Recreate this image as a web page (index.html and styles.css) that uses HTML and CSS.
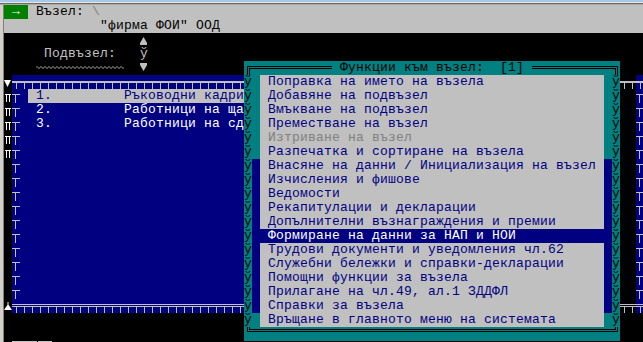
FILE: index.html
```html
<!DOCTYPE html>
<html>
<head>
<meta charset="utf-8">
<link rel="stylesheet" href="styles.css">
</head>
<body>
<div class="chrome"></div>
<div class="frame">
  <div class="edge"></div>
  <div class="screen">
    <div class="row gr"><span class="grn"> → </span><span class="tk"> Възел: </span><span class="slash">\</span></div>
    <div class="row gr"><span class="tk">            "фирма ФОИ" ООД</span></div>
    <div class="row"><span class="lt">                 </span><span class="up"></span></div>
    <div class="row"><span class="lt">     Подвъзел:   ў</span></div>
    <div class="row"><span class="lt">    </span><svg class="wave" width="88" height="14" viewBox="0 0 88 14"><path d="M0 6.5 Q1 4.5 2 6.5 T4 6.5 T6 6.5 T8 6.5 T10 6.5 T12 6.5 T14 6.5 T16 6.5 T18 6.5 T20 6.5 T22 6.5 T24 6.5 T26 6.5 T28 6.5 T30 6.5 T32 6.5 T34 6.5 T36 6.5 T38 6.5 T40 6.5 T42 6.5 T44 6.5 T46 6.5 T48 6.5 T50 6.5 T52 6.5 T54 6.5 T56 6.5 T58 6.5 T60 6.5 T62 6.5 T64 6.5 T66 6.5 T68 6.5 T70 6.5 T72 6.5 T74 6.5 T76 6.5 T78 6.5 T80 6.5 T82 6.5 T84 6.5 T86 6.5 T88 6.5"/></svg><span class="lt">  </span><span class="down"></span></div>
    <div class="row"><span class="dn"></span><span class="hd main"></span><span class="hd sh"></span><span class="hd end"></span></div>
    <div class="row"><span class="pi"></span><span class="tee"></span><span class="lst"><span class="gap"> </span><span class="hl"> 1.         Ръководни кадри</span></span><span class="shd"></span><span class="tee"></span></div>
    <div class="row"><span class="pi"></span><span class="tee"></span><span class="lst">  2.         Работници на ща</span><span class="shd"></span><span class="tee"></span></div>
    <div class="row"><span class="pi"></span><span class="tee"></span><span class="lst">  3.         Работници на сд</span><span class="shd"></span><span class="tee"></span></div>
    <div class="row"><span class="pi"></span><span class="tee"></span><span class="lst"></span><span class="shd"></span><span class="tee"></span></div>
    <div class="row"><span class="pi"></span><span class="tee"></span><span class="lst"></span><span class="shd"></span><span class="tee"></span></div>
    <div class="row"><span class="k"></span><span class="tee"></span><span class="lst"></span><span class="shd"></span><span class="tee"></span></div>
    <div class="row"><span class="k"></span><span class="tee"></span><span class="lst"></span><span class="shd"></span><span class="tee"></span></div>
    <div class="row"><span class="k"></span><span class="tee"></span><span class="lst"></span><span class="shd"></span><span class="tee"></span></div>
    <div class="row"><span class="k"></span><span class="tee"></span><span class="lst"></span><span class="shd"></span><span class="tee"></span></div>
    <div class="row"><span class="k"></span><span class="tee"></span><span class="lst"></span><span class="shd"></span><span class="tee"></span></div>
    <div class="row"><span class="k"></span><span class="tee"></span><span class="lst"></span><span class="shd"></span><span class="tee"></span></div>
    <div class="row"><span class="k"></span><span class="tee"></span><span class="lst"></span><span class="shd"></span><span class="tee"></span></div>
    <div class="row"><span class="k"></span><span class="tee"></span><span class="lst"></span><span class="shd"></span><span class="tee"></span></div>
    <div class="row"><span class="k"></span><span class="tee"></span><span class="lst"></span><span class="shd"></span><span class="tee"></span></div>
    <div class="row"><span class="k"></span><span class="tee"></span><span class="lst"></span><span class="shd"></span><span class="tee"></span></div>
    <div class="row"><span class="upw"></span><span class="ft main"></span><span class="ft sh"></span><span class="ft end"></span></div>
    <div class="row"></div>
    <div class="row"></div>
    <div class="row last"><span class="sb1"></span><span class="sb2"></span></div>

    <div class="menu">
      <div class="mtop"><span class="tl"></span><span class="dbl"></span><span class="ttl"> Функции към възел:  [1] </span><span class="dbl"></span><span class="tr"></span></div>
      <div class="mi"><span class="bd">ў</span><span class="sd"></span><span class="it">Поправка на името на възела</span><span class="sd"></span><span class="bd">ў</span></div>
      <div class="mi"><span class="bd">ў</span><span class="sd"></span><span class="it">Добавяне на подвъзел</span><span class="sd"></span><span class="bd">ў</span></div>
      <div class="mi"><span class="bd">ў</span><span class="sd"></span><span class="it">Вмъкване на подвъзел</span><span class="sd"></span><span class="bd">ў</span></div>
      <div class="mi"><span class="bd">ў</span><span class="sd"></span><span class="it">Преместване на възел</span><span class="sd"></span><span class="bd">ў</span></div>
      <div class="mi"><span class="bd">ў</span><span class="sd"></span><span class="it dis">Изтриване на възел</span><span class="sd"></span><span class="bd">ў</span></div>
      <div class="mi"><span class="bd">ў</span><span class="sd"></span><span class="it">Разпечатка и сортиране на възела</span><span class="sd"></span><span class="bd">ў</span></div>
      <div class="mi b"><span class="bd">ў</span><span class="sd"></span><span class="it">Внасяне на данни / Инициализация на възел</span><span class="sd"></span><span class="bd">ў</span></div>
      <div class="mi b"><span class="bd">ў</span><span class="sd"></span><span class="it">Изчисления и фишове</span><span class="sd"></span><span class="bd">ў</span></div>
      <div class="mi b"><span class="bd">ў</span><span class="sd"></span><span class="it">Ведомости</span><span class="sd"></span><span class="bd">ў</span></div>
      <div class="mi b"><span class="bd">ў</span><span class="sd"></span><span class="it">Рекапитулации и декларации</span><span class="sd"></span><span class="bd">ў</span></div>
      <div class="mi b"><span class="bd">ў</span><span class="sd"></span><span class="it">Допълнителни възнаграждения и премии</span><span class="sd"></span><span class="bd">ў</span></div>
      <div class="mi b"><span class="bd">ў</span><span class="sd"></span><span class="it sel">Формиране на данни за НАП и НОИ</span><span class="sd"></span><span class="bd">ў</span></div>
      <div class="mi b"><span class="bd">ў</span><span class="sd"></span><span class="it">Трудови документи и уведомления чл.62</span><span class="sd"></span><span class="bd">ў</span></div>
      <div class="mi b"><span class="bd">ў</span><span class="sd"></span><span class="it">Служебни бележки и справки-декларации</span><span class="sd"></span><span class="bd">ў</span></div>
      <div class="mi b"><span class="bd">ў</span><span class="sd"></span><span class="it">Помощни функции за възела</span><span class="sd"></span><span class="bd">ў</span></div>
      <div class="mi b"><span class="bd">ў</span><span class="sd"></span><span class="it">Прилагане на чл.49, ал.1 ЗДДФЛ</span><span class="sd"></span><span class="bd">ў</span></div>
      <div class="mi b"><span class="bd">ў</span><span class="sd"></span><span class="it">Справки за възела</span><span class="sd"></span><span class="bd">ў</span></div>
      <div class="mi"><span class="bd">ў</span><span class="sd"></span><span class="it">Връщане в главното меню на системата</span><span class="sd"></span><span class="bd">ў</span></div>
      <div class="mbot"><span class="bl"></span><span class="dblb"></span><span class="br"></span></div>
    </div>
  </div>
</div>
</body>
</html>
```

FILE: styles.css
```css
html, body {
  margin: 0;
  padding: 0;
}
body {
  width: 643px;
  height: 342px;
  overflow: hidden;
  background: #000;
  font-family: "Liberation Mono", "DejaVu Sans Mono", monospace;
  font-size: 13px;
  letter-spacing: 0.2px;
  line-height: 14px;
}
.chrome {
  height: 5px;
  background: linear-gradient(to bottom, #a6c8ee 0 2px, #e6e6e6 2px 3px, #6e6c60 3px 4px, #a8a8a0 4px 5px);
}
.frame {
  display: flex;
  height: 337px;
}
.edge {
  width: 4px;
  flex: none;
  background: linear-gradient(to right, #d4d0c8 0 3px, #808080 3px 4px);
}
.screen {
  position: relative;
  width: 639px;
  height: 337px;
  overflow: hidden;
  flex: none;
}
.row {
  display: flex;
  height: 14px;
  white-space: pre;
}
.row > * { flex: none; }
.row.last { height: 1px; }
.gr { background: #c0c0c0; }
.grn { background: #008000; color: #fff; }
.tk { color: #000; }
.slash { color: #808080; }
.lt { color: #c0c0c0; }
.wave { display: block; }
.wave path { fill: none; stroke: #b8b8b8; stroke-width: 1; }

.up, .down, .dn, .upw, .k, .pi, .tee {
  display: block;
  width: 8px;
  height: 14px;
  position: relative;
}
.up::after {
  content: "";
  position: absolute;
  left: 0;
  top: 4px;
  width: 7px;
  height: 8px;
  background: #c0c0c0;
  clip-path: polygon(50% 0, 100% 75%, 100% 100%, 0 100%, 0 75%);
}
.down::after {
  content: "";
  position: absolute;
  left: 0;
  top: 2px;
  width: 7px;
  height: 8px;
  background: #c0c0c0;
  clip-path: polygon(0 0, 100% 0, 100% 25%, 50% 100%, 0 25%);
}
.dn::after {
  content: "";
  position: absolute;
  left: 0;
  top: 5px;
  width: 7px;
  height: 7px;
  background: #fff;
  clip-path: polygon(0 0, 100% 0, 50% 100%);
}
.upw::after {
  content: "";
  position: absolute;
  left: 0;
  top: 3px;
  width: 8px;
  height: 8px;
  background: #fff;
  clip-path: polygon(44% 0, 56% 0, 56% 35%, 100% 100%, 0 100%, 44% 35%);
}
.pi {
  background:
    linear-gradient(#fff, #fff) 1px 5px / 6px 1px no-repeat,
    linear-gradient(#fff, #fff) 2px 5px / 1px 8px no-repeat,
    linear-gradient(#fff, #fff) 5px 5px / 1px 8px no-repeat,
    #000;
}
.tee {
  background:
    linear-gradient(#c0c0c0, #c0c0c0) 0 5px / 8px 1px no-repeat,
    linear-gradient(#c0c0c0, #c0c0c0) 3px 5px / 1px 9px no-repeat,
    #000080;
}
.hd, .ft { display: block; height: 14px; }
.hd {
  background:
    linear-gradient(#c0c0c0, #c0c0c0) 0 6px / 100% 2px no-repeat,
    repeating-linear-gradient(to right, transparent 0 4px, #c0c0c0 4px 5px, transparent 5px 8px) 0 8px / 100% 6px no-repeat,
    #000080;
}
.ft {
  background:
    linear-gradient(#c0c0c0, #c0c0c0) 0 5px / 100% 1px no-repeat,
    linear-gradient(#c0c0c0, #c0c0c0) 0 7px / 100% 1px no-repeat,
    repeating-linear-gradient(to right, transparent 0 4px, #c0c0c0 4px 5px, transparent 5px 8px) 0 8px / 100% 6px no-repeat,
    #000080;
}
.hd.sh, .ft.sh { background-color: #000; width: 16px; }
.main { width: 608px; }
.end { width: 8px; }
.lst {
  display: flex;
  width: 600px;
  height: 14px;
  background: #000080;
  color: #fff;
  overflow: hidden;
}
.hl { flex: 1; background: #c0c0c0; color: #000080; }
.shd { display: block; width: 16px; height: 14px; background: #000; }
.sb1 { display: block; width: 25px; height: 1px; margin-left: 8px; background: #c0c0c0; }
.sb2 { display: block; width: 14px; height: 1px; margin-left: 1px; background: #c0c0c0; }

/* menu window */
.menu {
  position: absolute;
  left: 240px;
  top: 56px;
  width: 376px;
  display: flex;
  flex-direction: column;
  white-space: pre;
}
.mtop, .mbot, .mi {
  display: flex;
  height: 14px;
  background: #008080;
}
.mtop > *, .mbot > *, .mi > * { flex: none; display: block; height: 14px; }
.ttl { color: #000; }
.bd { width: 8px; color: #000; overflow: hidden; }
.sd { width: 8px; }
.mi.b .sd { background: #000080; }
.it {
  width: 344px;
  box-sizing: border-box;
  padding-left: 8px;
  background: #c0c0c0;
  color: #000080;
  overflow: hidden;
}
.it.dis { color: #808080; }
.it.sel { background: #000080; color: #fff; }
.dbl {
  width: 80px;
  background:
    linear-gradient(#000, #000) 0 5px / 100% 1px no-repeat,
    linear-gradient(#000, #000) 0 7px / 100% 1px no-repeat;
}
.dblb {
  width: 360px;
  background:
    linear-gradient(#000, #000) 0 2px / 100% 1px no-repeat,
    linear-gradient(#000, #000) 0 4px / 100% 1px no-repeat;
}
.tl, .tr, .bl, .br { width: 8px; }
.tl {
  background:
    linear-gradient(#000, #000) 3px 5px / 5px 1px no-repeat,
    linear-gradient(#000, #000) 3px 5px / 1px 9px no-repeat,
    linear-gradient(#000, #000) 5px 7px / 3px 1px no-repeat,
    linear-gradient(#000, #000) 5px 7px / 1px 7px no-repeat;
}
.tr {
  background:
    linear-gradient(#000, #000) 0 5px / 6px 1px no-repeat,
    linear-gradient(#000, #000) 5px 5px / 1px 9px no-repeat,
    linear-gradient(#000, #000) 0 7px / 4px 1px no-repeat,
    linear-gradient(#000, #000) 3px 7px / 1px 7px no-repeat;
}
.bl {
  background:
    linear-gradient(#000, #000) 3px 0 / 1px 5px no-repeat,
    linear-gradient(#000, #000) 3px 4px / 5px 1px no-repeat,
    linear-gradient(#000, #000) 5px 0 / 1px 3px no-repeat,
    linear-gradient(#000, #000) 5px 2px / 3px 1px no-repeat;
}
.br {
  background:
    linear-gradient(#000, #000) 5px 0 / 1px 5px no-repeat,
    linear-gradient(#000, #000) 0 4px / 6px 1px no-repeat,
    linear-gradient(#000, #000) 3px 0 / 1px 3px no-repeat,
    linear-gradient(#000, #000) 0 2px / 4px 1px no-repeat;
}
```
